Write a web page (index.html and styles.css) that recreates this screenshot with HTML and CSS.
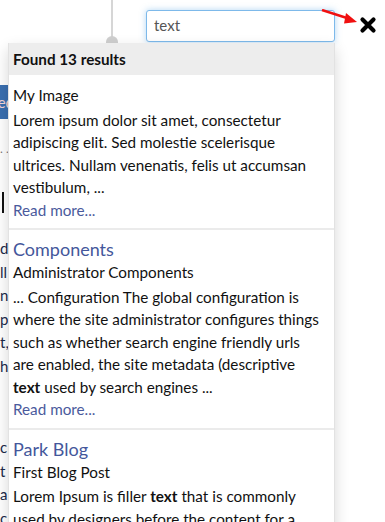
FILE: index.html
```html
<!DOCTYPE html>
<html lang="en">
  <head>
    <meta charset="UTF-8" />
    <title>Search</title>
    <link rel="stylesheet" href="styles.css">
  </head>
  <body>
    <div class="page">
      <div class="topbar">
        <span class="connector"></span>
        <input class="search-input" type="text" value="text" />
        <span class="close-btn">
          <svg width="18" height="18" viewBox="0 0 18 18">
            <path d="M3.5 3.5 L14.5 14.5 M14.5 3.5 L3.5 14.5" stroke="#000" stroke-width="4.2" stroke-linecap="round" />
          </svg>
        </span>
        <svg class="arrow" width="40" height="20" viewBox="0 0 40 20">
          <path d="M1 1 L29 10" stroke="#f01010" stroke-width="2.5" />
          <path d="M25 4 L36 13 L23 14.5 Z" fill="#f01010" />
        </svg>
      </div>

      <div class="behind">
        <div class="blue-tab">Media</div>
        <div class="dots">. . .</div>
        <div class="bar"></div>
        <div class="behind-text">
          <p>de</p>
          <p>ll</p>
          <p>n</p>
          <p>pa</p>
          <p>t,</p>
          <p>hi</p>
        </div>
        <div class="behind-text lower">
          <p>c</p>
          <p>t</p>
          <p>a</p>
          <p>c</p>
        </div>
      </div>

      <div class="results">
        <div class="results-head">Found 13 results</div>

        <div class="result">
          <div class="result-title plain">My Image</div>
          <p class="result-body">Lorem ipsum dolor sit amet, consectetur adipiscing elit. Sed molestie scelerisque ultrices. Nullam venenatis, felis ut accumsan vestibulum, ...</p>
          <a class="read-more" href="#">Read more...</a>
        </div>

        <div class="result">
          <a class="result-title" href="#">Components</a>
          <div class="result-sub">Administrator Components</div>
          <p class="result-body">... Configuration The global configuration is where the site administrator configures things such as whether search engine friendly urls<br>are enabled, the site metadata (descriptive<br><b>text</b> used by search engines ...</p>
          <a class="read-more" href="#">Read more...</a>
        </div>

        <div class="result">
          <a class="result-title" href="#">Park Blog</a>
          <div class="result-sub">First Blog Post</div>
          <p class="result-body">Lorem Ipsum is filler <b>text</b> that is commonly used by designers before the content for a new site is ready.</p>
        </div>
      </div>
    </div>
  </body>
</html>
```

FILE: styles.css
```css
* {
  font-family: "Lato", "Liberation Sans", sans-serif;
  margin: 0;
  padding: 0;
  box-sizing: border-box;
}
body {
  background-color: #fff;
  color: #111;
}
.page {
  position: relative;
  width: 385px;
  height: 522px;
  overflow: hidden;
}
.topbar {
  display: flex;
  align-items: flex-start;
  padding: 10px 0 0 146px;
  height: 43px;
}
.connector {
  position: absolute;
  left: 111px;
  top: 0;
  width: 2px;
  height: 43px;
  background-color: #d6d6d6;
}
.connector::after {
  content: "";
  position: absolute;
  left: -5px;
  bottom: 0;
  width: 12px;
  height: 7px;
  border-radius: 6px 6px 0 0;
  background-color: #cfcfcf;
}
.search-input {
  width: 189px;
  height: 32px;
  padding: 0 7px 2px;
  border: 1px solid #7db9ea;
  border-radius: 3px;
  box-shadow: 0 0 6px rgba(102, 175, 233, 0.5);
  font-size: 15px;
  color: #555;
  outline: none;
}
.close-btn {
  display: flex;
  margin: 6px 0 0 24px;
}
.arrow {
  position: absolute;
  left: 321px;
  top: 9px;
}
.behind {
  padding-top: 42px;
  font-size: 15px;
  color: #1c2a4a;
}
.blue-tab {
  width: 8px;
  height: 34px;
  background-color: #3a6fb0;
  color: #f4d6d6;
  line-height: 34px;
  overflow: hidden;
  white-space: nowrap;
  text-indent: -16px;
}
.dots {
  margin-top: 22px;
  font-size: 12px;
  color: #777;
  white-space: nowrap;
}
.bar {
  margin: 36px 0 0 2px;
  width: 2px;
  height: 21px;
  background-color: #111;
}
.behind-text {
  margin-top: 24px;
  line-height: 23.5px;
}
.behind-text.lower {
  margin-top: 58px;
}
.results {
  position: absolute;
  left: 8px;
  top: 43px;
  width: 327px;
  bottom: -20px;
  background-color: #fff;
  border: 1px solid #e2e2e2;
  border-top: none;
  box-shadow: 0 6px 14px rgba(0, 0, 0, 0.16);
  font-size: 15.25px;
  line-height: 22.5px;
}
.results-head {
  height: 32px;
  padding: 5px 4px;
  background-color: #ededed;
  font-weight: 700;
}
.result {
  padding: 9px 8px 7px 4px;
  border-bottom: 2px solid #ebebeb;
}
.result-title {
  display: block;
  color: #44579b;
  text-decoration: none;
  font-size: 18px;
  line-height: 21px;
}
.result-title.plain {
  color: #111;
  font-size: 15.25px;
  line-height: 22.5px;
}
.result-sub {
  margin-top: 1px;
}
.result-body {
  margin-top: 2px;
}
.result-body b {
  font-weight: 700;
}
.read-more {
  display: block;
  color: #4a5a9c;
  text-decoration: none;
}
```
